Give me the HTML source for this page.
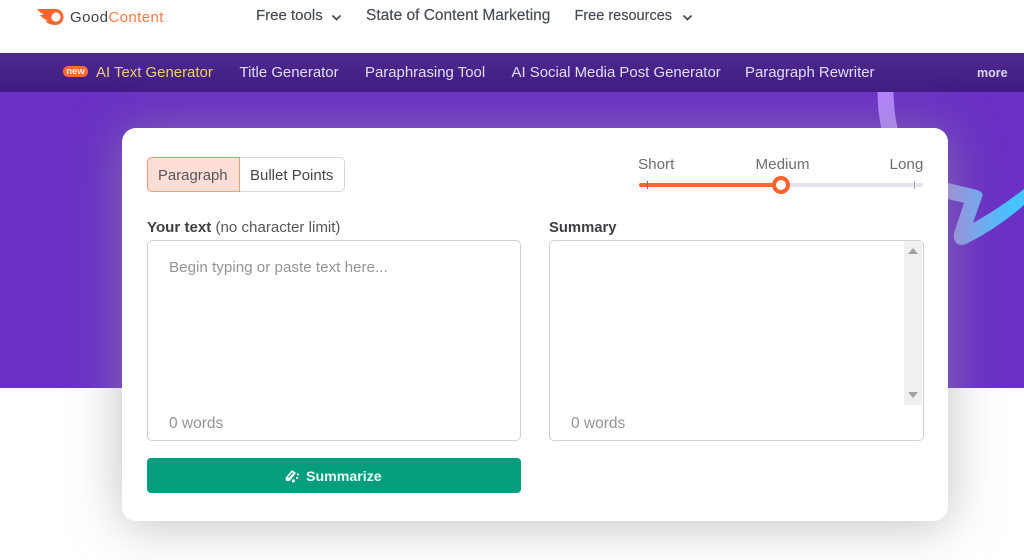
<!DOCTYPE html>
<html><head><meta charset="utf-8">
<style>
html,body{margin:0;padding:0;background:#fff}
body{width:1024px;height:560px;position:relative;overflow:hidden;font-family:"Liberation Sans",Arial,sans-serif}
.a{position:absolute}
.t{position:absolute;white-space:nowrap;line-height:18px}
.top{color:#454a54;top:7px;-webkit-text-stroke:.15px #454a54}
.nav{font-size:14.950px;color:#e3dcf8;top:64px}
.lab{font-size:15.200px;color:#6b6e75;top:156px}
.b{font-size:15px;color:#45474e}
</style></head><body>

<svg class="a" style="left:36px;top:8px" width="30" height="18" viewBox="0 0 30 18">
<path d="M1 1 H17 C23 0 27.500 4 27.500 9 C27.500 14 23.500 17 19.500 17 C14.500 17 11.500 15.500 9.500 13 L12 12.800 C8.500 11.500 6 9.500 4 7 L8 6.800 C5.500 5.500 2.800 3.500 1 1Z" fill="#ff642d"/>
<circle cx="20" cy="9" r="4.600" fill="#fff"/>
<path d="M21 6 A3 3 0 0 1 23 9 A3.500 3.500 0 0 0 21 6Z" fill="#ff642d"/>
</svg>
<div class="t" style="left:70px;top:9px;font-size:15px;color:#3d4048;letter-spacing:.42px">Good<span style="color:#ff7a45">Content</span></div>

<div class="t top" style="left:256px;font-size:15px">Free tools</div>
<svg class="a" style="left:331px;top:14px" width="11" height="8"><path d="M1.500 1.500 L5.500 5.500 L9.500 1.500" fill="none" stroke="#454a54" stroke-width="1.800"/></svg>
<div class="t top" style="left:366px;font-size:15.500px">State of Content Marketing</div>
<div class="t top" style="left:574.500px;font-size:14.500px">Free resources</div>
<svg class="a" style="left:682px;top:14px" width="11" height="8"><path d="M1.500 1.500 L5.500 5.500 L9.500 1.500" fill="none" stroke="#454a54" stroke-width="1.800"/></svg>

<div class="a" style="left:0;top:92px;width:1024px;height:296px;background:#6a31c4"></div>

<svg class="a" style="left:0;top:0" width="1024" height="560">
<defs><linearGradient id="g" gradientUnits="userSpaceOnUse" x1="948" y1="0" x2="1012" y2="0"><stop offset="0" stop-color="#a090e8"/><stop offset="1" stop-color="#45c4fd"/></linearGradient></defs>
<path d="M885.500 90 C885.500 105 887 120 891 135" fill="none" stroke="#b184fa" stroke-width="16"/>
<path d="M940 181 L977 190 Q984 192 982 197 L973 223 Q1000 208 1024 189 L1024 205 Q998 228 966 244 Q958 247 955 241 Q953 237 954 233 L964 203 L940 197 Z" fill="url(#g)"/>
</svg>

<div class="a" style="left:0;top:53px;width:1024px;height:39px;background:linear-gradient(#4c2b8c,#401a85)"></div>

<div class="a" style="left:122px;top:128px;width:826px;height:393px;background:#fff;border-radius:14px;box-shadow:0 4px 50px rgba(150,150,160,.6)"></div>

<div class="a" style="left:147px;top:157px;width:198px;height:35px;box-sizing:border-box;border:1px solid #d5d6dd;border-radius:5px;background:#fff"></div>
<div class="a" style="left:147px;top:157px;width:93px;height:35px;box-sizing:border-box;border:1px solid #ff9a78;border-radius:5px 0 0 5px;background:#ffdfd5"></div>
<div class="t b" style="left:158px;top:167px;color:#55565c;font-size:14.900px">Paragraph</div>
<div class="t b" style="left:250px;top:167px">Bullet Points</div>

<div class="t lab" style="left:638px">Short</div>
<div class="t lab" style="left:755.500px">Medium</div>
<div class="t lab" style="left:889.500px">Long</div>
<div class="a" style="left:639px;top:183px;width:284px;height:4px;border-radius:2px;background:#e3e3ec"></div>
<div class="a" style="left:639px;top:183px;width:142px;height:4px;border-radius:2px;background:#ff642d"></div>
<div class="a" style="left:647px;top:181px;width:1px;height:8px;background:#8c6a60"></div>
<div class="a" style="left:914px;top:181px;width:1px;height:8px;background:#a5a5ad"></div>
<div class="a" style="left:772px;top:176px;width:18px;height:18px;box-sizing:border-box;border:4px solid #ff642d;border-radius:50%;background:#fff"></div>

<div class="t" style="left:147px;top:219px;font-size:15.100px;color:#55565c"><b style="color:#3e3f45">Your text</b> (no character limit)</div>
<div class="t" style="left:549px;top:219px;font-size:14.800px;font-weight:bold;color:#3e3f45">Summary</div>

<div class="a" style="left:147px;top:240px;width:374px;height:201px;box-sizing:border-box;border:1px solid #d0d0d8;border-radius:5px;background:#fff"></div>
<div class="t" style="left:169px;top:259px;font-size:15.200px;color:#93949b">Begin typing or paste text here...</div>
<div class="t" style="left:169px;top:415px;font-size:15.500px;color:#93949b">0 words</div>

<div class="a" style="left:549px;top:240px;width:375px;height:201px;box-sizing:border-box;border:1px solid #d0d0d8;border-radius:5px;background:#fff"></div>
<div class="a" style="left:904px;top:241px;width:18px;height:164px;background:#f0f0f0"></div>
<div class="a" style="left:908px;top:248px;width:0;height:0;border-left:5px solid transparent;border-right:5px solid transparent;border-bottom:6px solid #a3a3a3"></div>
<div class="a" style="left:908px;top:392px;width:0;height:0;border-left:5px solid transparent;border-right:5px solid transparent;border-top:6px solid #a3a3a3"></div>
<div class="t" style="left:571px;top:415px;font-size:15.500px;color:#93949b">0 words</div>

<div class="a" style="left:147px;top:458px;width:374px;height:35px;border-radius:4px;background:#029e7e"></div>
<svg class="a" style="left:284px;top:468px" width="16" height="16" viewBox="0 0 16 16">
<path d="M1.500 10 L8 2 L12 5 L5.500 13 L2 13Z" fill="#fff"/>
<path d="M4.500 9.500 L9 4.500" stroke="#029e7e" stroke-width="1.200"/>
<rect x="13" y="5.500" width="1.800" height="1.800" fill="#fff"/><rect x="12" y="9" width="1.800" height="1.800" fill="#fff"/><rect x="8" y="11.500" width="2.800" height="2.800" fill="#fff"/>
</svg>
<div class="t" style="left:306px;top:468px;font-size:14.200px;font-weight:bold;color:#eafaf5">Summarize</div>

<div class="a" style="left:63px;top:66px;width:25px;height:11px;border-radius:5px;background:#ff6a35"></div>
<div class="t" style="left:63px;top:63px;width:25px;text-align:center;font-size:9.500px;font-weight:bold;color:#ffeee8">new</div>
<div class="t nav" style="left:96px;color:#e8d168">AI Text Generator</div>
<div class="t nav" style="left:239.500px">Title Generator</div>
<div class="t nav" style="left:365px">Paraphrasing Tool</div>
<div class="t nav" style="left:511.500px">AI Social Media Post Generator</div>
<div class="t nav" style="left:745px">Paragraph Rewriter</div>
<div class="t" style="left:977px;top:64px;font-size:12.500px;font-weight:bold;color:#ddd6f2">more</div>

</body></html>
